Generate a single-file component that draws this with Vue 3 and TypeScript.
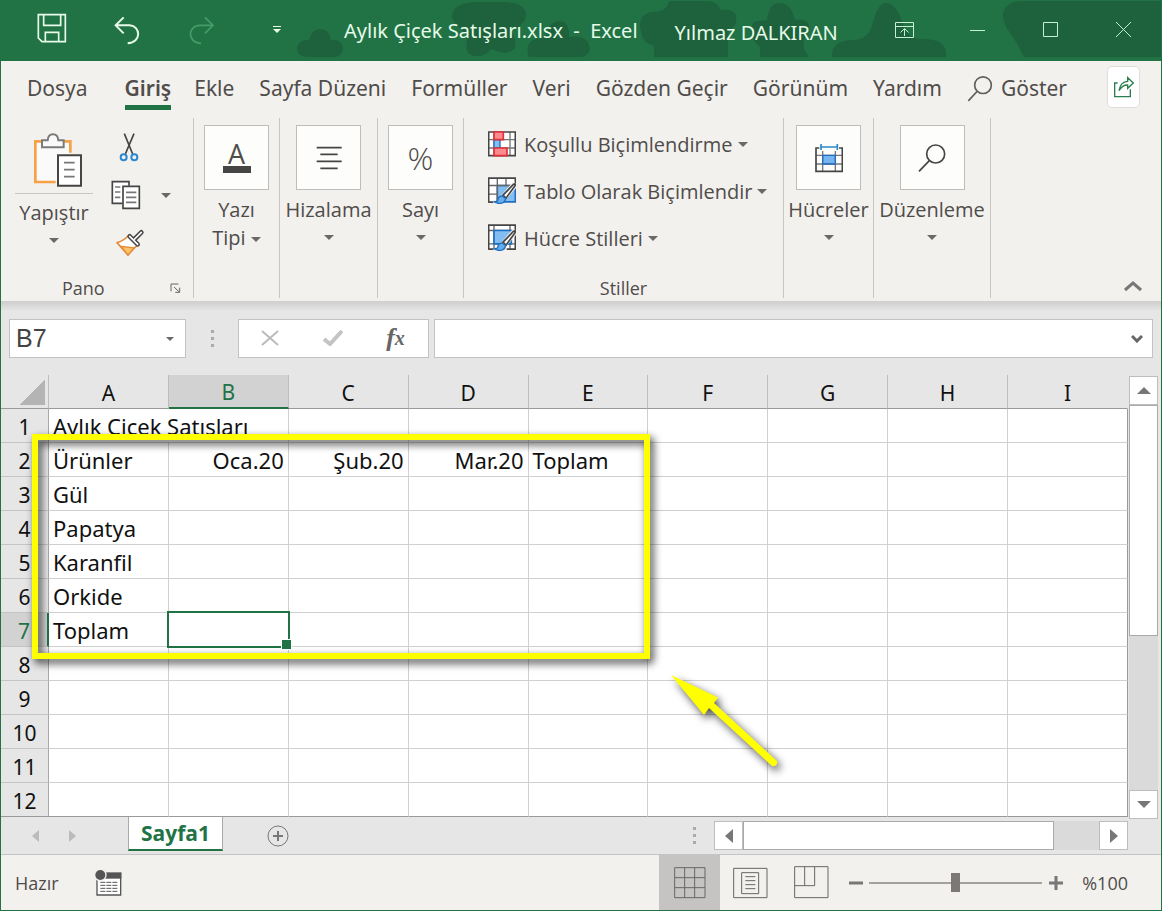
<script setup lang="ts">
import { ref } from 'vue'

interface Cell {
  text: string
  span?: number
  right?: boolean
  active?: boolean
}

const tabs: string[] = ['Dosya', 'Giriş', 'Ekle', 'Sayfa Düzeni', 'Formüller', 'Veri', 'Gözden Geçir', 'Görünüm', 'Yardım']
const activeTab = ref('Giriş')

const columns: string[] = ['A', 'B', 'C', 'D', 'E', 'F', 'G', 'H', 'I']

const labels: Record<number, string> = { 3: 'Gül', 4: 'Papatya', 5: 'Karanfil', 6: 'Orkide', 7: 'Toplam' }

function blanks(count: number): Cell[] {
  return Array.from({ length: count }, () => ({ text: '' }))
}

function cellsOf(row: number): Cell[] {
  if (row === 1) return [{ text: 'Aylık Çiçek Satışları', span: 2 }, ...blanks(7)]
  if (row === 2) {
    return [
      { text: 'Ürünler' },
      { text: 'Oca.20', right: true },
      { text: 'Şub.20', right: true },
      { text: 'Mar.20', right: true },
      { text: 'Toplam' },
      ...blanks(4),
    ]
  }
  return [{ text: labels[row] ?? '' }, { text: '', active: row === 7 }, ...blanks(7)]
}

const rows = Array.from({ length: 12 }, (_, i) => ({ number: i + 1, cells: cellsOf(i + 1) }))

const cellName = ref('B7')
const formula = ref('')
const zoom = ref(100)
</script>

<template>
  <div class="window">
    <header class="titlebar">
      <svg class="clouds" viewBox="0 0 882 61" width="882" height="61" aria-hidden="true">
        <g fill="#1e613d">
          <path d="M28 57Q18 56 18 48Q20 39 30 40Q33 29 41 29Q50 29 52 40Q63 39 64 48Q64 56 56 57Z" />
          <path d="M173 18Q172 2 200 2H225Q247 2 247 16Q246 25 232 31Q238 40 236 48Q230 55 220 52L212 49Q207 57 195 56Q185 54 188 40Q188 32 178 26Z" />
          <path d="M250 57Q244 40 262 38Q268 36 270 27Q276 19 285 22Q291 27 290 37Q310 34 311 50Q308 57 302 57Z" />
          <path d="M375 57V46Q363 42 363 35Q356 14 374 12Q388 12 390 1H430Q438 2 442 10Q462 8 456 25Q450 30 449 34V57Z" />
          <path d="M481 57V47Q466 33 475 22Q485 20 488 20Q490 3 500 3Q512 3 516 20Q535 18 528 34Q520 44 530 57Z" />
          <path d="M553 57Q552 40 575 40Q591 39 594 22Q599 3 607 3Q617 3 623 22Q629 39 642 39Q669 38 667 57Z" />
          <path d="M745 57Q738 42 727 27Q717 5 740 1H882V57Z" />
        </g>
      </svg>
      <div class="quick">
        <button aria-label="Kaydet">
          <svg viewBox="108 36 90 90" width="30" height="30" fill="none" stroke="#e9fbe9" stroke-width="5">
            <path d="M112 41H193V122H123L112 111ZM128 41V73H179V41M133 122V94H173V122" />
          </svg>
        </button>
        <button class="arrow-button" aria-label="Geri Al">
          <svg viewBox="340 45 84 90" width="28" height="30" fill="none" stroke="#e9fbe9" stroke-width="6">
            <path d="M372 52L348 76L372 100M348 76H390C424 78 426 128 384 130" />
          </svg>
        </button>
        <button class="arrow-button" aria-label="Yinele" disabled>
          <svg viewBox="567 45 84 90" width="28" height="30" fill="none" stroke="#459c68" stroke-width="5">
            <path d="M618 52L642 76L618 100M642 76H600C566 78 564 128 606 130" />
          </svg>
        </button>
        <button class="arrow-button" aria-label="Hızlı Erişim Araç Çubuğunu Özelleştir">
          <svg viewBox="0 0 8 8" width="8" height="8" fill="#e9fbe9"><path d="M0 0H8V1H0ZM0 3H8L4 7Z" /></svg>
        </button>
      </div>
      <h1 class="title">Aylık Çiçek Satışları.xlsx&nbsp; -&nbsp; Excel</h1>
      <span class="user">Yılmaz DALKIRAN</span>
      <div class="controls">
        <button aria-label="Şerit Görüntüleme Seçenekleri">
          <svg viewBox="0 0 20 16" width="20" height="16" fill="none" stroke="#c5f0d2">
            <path d="M.5 .5H18.5V15.5H.5ZM.5 4.5H18.5M9.5 14V7M5.500 10.500L9.500 6.500L13.500 10.500" />
          </svg>
        </button>
        <button aria-label="Simge Durumuna Küçült">
          <svg viewBox="0 0 16 16" width="16" height="16" stroke="#c5f0d2"><path d="M0 8.500H15" /></svg>
        </button>
        <button aria-label="Ekranı Kapla">
          <svg viewBox="0 0 16 16" width="16" height="16" fill="none" stroke="#c5f0d2"><path d="M.5 .5H14.500V14.500H.5Z" /></svg>
        </button>
        <button aria-label="Kapat">
          <svg viewBox="0 0 16 16" width="16" height="16" stroke="#c5f0d2"><path d="M0 0L15 15M15 0L0 15" /></svg>
        </button>
      </div>
    </header>

    <nav class="tabs">
      <button
        v-for="tab in tabs"
        :key="tab"
        class="tab"
        :class="{ current: tab === activeTab, file: tab === 'Dosya' }"
        @click="activeTab = tab"
      >
        {{ tab }}
      </button>
      <button class="tab tell">
        <svg viewBox="810 228 78 80" width="26" height="27" fill="none" stroke="#605e5c" stroke-width="5">
          <circle cx="858" cy="258" r="25" /><path d="M840 277L814 305" />
        </svg>
        Göster
      </button>
      <button class="share" aria-label="Paylaş">
        <svg viewBox="1236 228 66 66" width="22" height="22" fill="none" stroke="#2c7d50" stroke-width="4">
          <path d="M1250 249H1241V290H1288V268M1254 272Q1258 245 1280 244V233L1297 249L1280 265V255Q1264 255 1254 272Z" />
        </svg>
      </button>
    </nav>

    <section class="ribbon">
      <div class="group pano">
        <div class="tools">
          <button class="paste">
            <svg viewBox="100 50 150 165" width="50" height="55" fill="none">
              <path d="M107 77H213V118H176V200H107Z" fill="#fafafa" />
              <path d="M128 78H107V200H168M192 78H212V112" stroke="#f7a145" stroke-width="8" />
              <path d="M127 75H144C146 51 174 51 176 75H192V96H127Z" fill="#fafafa" stroke="#7b7b7b" stroke-width="6" />
              <path d="M175 120H244V211H175Z" fill="#fff" stroke="#454545" stroke-width="6" />
              <path d="M193 142H225M193 163H225M193 184H225" stroke="#777" stroke-width="5" />
            </svg>
            <span class="paste-label">Yapıştır</span>
            <i class="caret"></i>
          </button>
          <div class="small-tools">
            <button aria-label="Kes">
              <svg viewBox="357 48 60 90" width="20" height="30" fill="none">
                <path d="M373 53L398 114M402 53L376 114" stroke="#454545" stroke-width="5" />
                <g stroke="#2b88d0" stroke-width="6"><circle cx="371" cy="124" r="9" /><circle cx="403" cy="124" r="9" /></g>
              </svg>
            </button>
            <button class="copy" aria-label="Kopyala">
              <svg viewBox="334 195 90 90" width="30" height="30" fill="none" stroke="#454545" stroke-width="5">
                <path d="M388 212V200H338V265H368" fill="#fff" />
                <path d="M346 216H362M346 231H362M346 247H362" stroke="#777" />
                <path d="M370 214H419V280H370Z" fill="#fff" />
                <path d="M379 232H410M379 247H410M379 262H410" stroke="#777" />
              </svg>
              <i class="caret"></i>
            </button>
            <button aria-label="Biçim Boyacısı">
              <svg viewBox="343 342 90 84" width="30" height="28" fill="none" stroke-linejoin="round">
                <path d="M349 383Q368 378 382 363L410 391Q398 400 382 420Z" fill="#fff" stroke="#e98a35" stroke-width="5" />
                <path d="M361 394L401 399L382 420Z" fill="#fbc46b" stroke="#e98a35" stroke-width="4" />
                <g stroke="#454545" stroke-width="14" stroke-linecap="round"><path d="M387 364L411 388M402 372L422 352" /></g>
                <g stroke="#fff" stroke-width="5" stroke-linecap="round"><path d="M387 364L411 388M402 372L422 352" /></g>
              </svg>
            </button>
          </div>
        </div>
        <div class="group-name">
          <span>Pano</span>
          <button class="launcher" aria-label="Pano seçenekleri">
            <svg viewBox="511 503 33 33" width="11" height="11" fill="none" stroke="#666" stroke-width="3">
              <path d="M514 528V506H536M523 515L539 530M540 517V531H527" />
            </svg>
          </button>
        </div>
      </div>

      <div class="group font">
        <button class="big">
          <span class="tile"><span class="letter">A</span></span>
          <span>Yazı<br />Tipi <i class="caret"></i></span>
        </button>
      </div>

      <div class="group align">
        <button class="big">
          <span class="tile">
            <svg viewBox="108 90 78 72" width="26" height="24" stroke="#454545" stroke-width="5">
              <path d="M110 95H185M121 115H173M110 136H185M121 157H173" />
            </svg>
          </span>
          <span>Hizalama</span>
          <i class="caret"></i>
        </button>
      </div>

      <div class="group number">
        <button class="big">
          <span class="tile percent">%</span>
          <span>Sayı</span>
          <i class="caret"></i>
        </button>
      </div>

      <div class="group styles">
        <div class="style-list">
          <button>
            <svg viewBox="24 45 84 78" width="28" height="26" fill="none">
              <path d="M26 48H106V119H26Z" fill="#fff" />
              <path d="M26 71H106M26 96H106M42 48V119M90 48V119" stroke="#777" stroke-width="4" />
              <path d="M26 48H106V119H26Z" stroke="#454545" stroke-width="5" />
              <path d="M42 71H60V96H42Z" fill="#83bdf1" stroke="#1f6fc0" stroke-width="4" />
              <path d="M42 48H70V71H42ZM42 96H81V119H42Z" fill="#fa8c90" stroke="#e03038" stroke-width="5" />
            </svg>
            Koşullu Biçimlendirme <i class="caret"></i>
          </button>
          <button>
            <svg viewBox="24 187 84 80" width="28" height="27" fill="none">
              <path d="M26 190H106V262H26Z" fill="#fff" />
              <path d="M52 212H106V261H52Z" fill="#83bdf1" stroke="#1f6fc0" stroke-width="5" />
              <path d="M26 212H106M26 238H52M52 190V262M78 190V212" stroke="#666" stroke-width="4" />
              <path d="M26 264V190H106V206M26 262H40" stroke="#454545" stroke-width="5" />
              <path d="M107 206L62 258" stroke="#f3f1ee" stroke-width="19" />
              <path d="M69 241L100 209Q108 204 105 213L78 250Z" fill="#fff" stroke="#454545" stroke-width="5" />
              <path d="M66 243Q54 244 53 258Q48 262 41 260Q55 269 68 264Q78 259 76 250Z" fill="#69aceb" stroke="#1f6fc0" stroke-width="4" />
            </svg>
            Tablo Olarak Biçimlendir <i class="caret"></i>
          </button>
          <button>
            <svg viewBox="24 187 84 80" width="28" height="27" fill="none">
              <path d="M26 190H106V262H26Z" fill="#fff" />
              <path d="M26 206H106M26 246H106M42 190V262M90 190V262" stroke="#666" stroke-width="4" />
              <path d="M42 206H94V246H42Z" fill="#83bdf1" stroke="#1f6fc0" stroke-width="5" />
              <path d="M26 264V190H106V262H80M26 262H40" stroke="#454545" stroke-width="5" />
              <path d="M107 206L62 258" stroke="#f3f1ee" stroke-width="19" />
              <path d="M69 241L100 209Q108 204 105 213L78 250Z" fill="#fff" stroke="#454545" stroke-width="5" />
              <path d="M66 243Q54 244 53 258Q48 262 41 260Q55 269 68 264Q78 259 76 250Z" fill="#69aceb" stroke="#1f6fc0" stroke-width="4" />
            </svg>
            Hücre Stilleri <i class="caret"></i>
          </button>
        </div>
        <div class="group-name"><span>Stiller</span></div>
      </div>

      <div class="group cells">
        <button class="big">
          <span class="tile">
            <svg viewBox="135 84 84 90" width="28" height="30" fill="none">
              <path d="M158 121H196V147H158Z" fill="#76b5ef" />
              <path d="M138 121H217M138 147H217M158 108V169M196 108V169" stroke="#777" stroke-width="4" />
              <path d="M158 121H196V147H158Z" stroke="#1f6fc0" stroke-width="4" />
              <path d="M148 99H138V169H217V99H207" stroke="#454545" stroke-width="5" />
              <path d="M153 96H202M153 87V105M202 87V105" stroke="#2b88c8" stroke-width="5" />
            </svg>
          </span>
          <span>Hücreler</span>
          <i class="caret"></i>
        </button>
      </div>

      <div class="group editing">
        <button class="big">
          <span class="tile">
            <svg viewBox="446 85 84 84" width="28" height="28" fill="none" stroke="#454545" stroke-width="5">
              <circle cx="499" cy="115" r="27" /><path d="M480 135L449 167" />
            </svg>
          </span>
          <span>Düzenleme</span>
          <i class="caret"></i>
        </button>
      </div>

      <button class="collapse" aria-label="Şeridi Daralt">
        <svg viewBox="0 0 18 12" width="18" height="12" fill="none" stroke="#777" stroke-width="3"><path d="M1 10L9 3L17 10" /></svg>
      </button>
    </section>

    <section class="formula-bar">
      <div class="name-box">
        <input v-model="cellName" aria-label="Ad Kutusu" />
        <button aria-label="Ad listesi"><i class="caret small"></i></button>
      </div>
      <span class="dots"><i></i><i></i><i></i></span>
      <div class="entry">
        <button aria-label="İptal" disabled>
          <svg viewBox="0 0 18 16" width="18" height="16" stroke="#bbb" stroke-width="2"><path d="M1 1L17 15M17 1L1 15" /></svg>
        </button>
        <button aria-label="Gir" disabled>
          <svg viewBox="0 0 20 16" width="20" height="16" fill="none" stroke="#c4c4c4" stroke-width="4"><path d="M1 9L7 14L19 1" /></svg>
        </button>
        <button class="fx" aria-label="İşlev Ekle">f<small>x</small></button>
      </div>
      <div class="formula">
        <input v-model="formula" aria-label="Formül Çubuğu" />
        <button aria-label="Formül Çubuğunu Genişlet">
          <svg viewBox="0 0 12 9" width="12" height="9" fill="none" stroke="#666" stroke-width="3"><path d="M1 2L6 7L11 2" /></svg>
        </button>
      </div>
    </section>

    <main class="sheet">
      <div class="grid-wrap">
        <table class="grid">
          <thead>
            <tr>
              <th class="corner" aria-label="Tümünü Seç"></th>
              <th v-for="col in columns" :key="col" scope="col" :class="{ picked: col === 'B' }">{{ col }}</th>
            </tr>
          </thead>
          <tbody>
            <tr v-for="row in rows" :key="row.number">
              <th scope="row" :class="{ picked: row.number === 7 }">{{ row.number }}</th>
              <td
                v-for="(cell, i) in row.cells"
                :key="i"
                :colspan="cell.span"
                :class="{ right: cell.right, active: cell.active }"
              >
                {{ cell.text }}
              </td>
            </tr>
          </tbody>
        </table>
        <div class="highlight"></div>
        <svg class="arrow" viewBox="0 0 130 110" width="130" height="110" aria-hidden="true">
          <path d="M11 12L58 34.500L54 40L117 98Q118 104 112 103L49 45L44 52Z" fill="#ff0" />
        </svg>
      </div>
      <div class="vscroll">
        <button aria-label="Yukarı"><svg viewBox="0 0 14 7" width="14" height="7" fill="#777"><path d="M7 0L14 7H0Z" /></svg></button>
        <div class="vthumb"></div>
        <button aria-label="Aşağı"><svg viewBox="0 0 14 7" width="14" height="7" fill="#777"><path d="M0 0H14L7 7Z" /></svg></button>
      </div>
    </main>

    <div class="sheet-tabs">
      <button class="step" aria-label="Önceki sayfa" disabled><svg viewBox="0 0 7 12" width="7" height="12" fill="#bbb"><path d="M7 0V12L0 6Z" /></svg></button>
      <button class="step" aria-label="Sonraki sayfa" disabled><svg viewBox="0 0 7 12" width="7" height="12" fill="#bbb"><path d="M0 0V12L7 6Z" /></svg></button>
      <button class="sheet-tab">Sayfa1</button>
      <button class="add" aria-label="Yeni sayfa">
        <svg viewBox="0 0 24 24" width="24" height="24" fill="none" stroke="#777">
          <circle cx="12" cy="12" r="10" /><path d="M7 12H17M12 7V17" stroke-width="2" />
        </svg>
      </button>
      <span class="dots"><i></i><i></i><i></i></span>
      <div class="hscroll">
        <button aria-label="Sola"><svg viewBox="0 0 8 14" width="8" height="14" fill="#777"><path d="M8 0V14L0 7Z" /></svg></button>
        <div class="hthumb"></div>
        <button aria-label="Sağa"><svg viewBox="0 0 8 14" width="8" height="14" fill="#777"><path d="M0 0V14L8 7Z" /></svg></button>
      </div>
    </div>

    <footer class="status">
      <span class="ready">Hazır</span>
      <button class="macro" aria-label="Makro Kaydet">
        <svg viewBox="284 832 81 81" width="27" height="27" fill="none" stroke="#555" stroke-width="4">
          <path d="M290 843V910H361V843" fill="#fff" />
          <path d="M290 842H363V861H290Z" fill="#555" stroke="none" />
          <circle cx="300" cy="850" r="19" fill="#f3f1ee" stroke="none" /><circle cx="300" cy="850" r="15" fill="#555" stroke="none" />
          <path d="M300 872H352M300 881H352M300 890H352M300 899H352" stroke-width="3" stroke-dasharray="15 3" />
        </svg>
      </button>
      <div class="views">
        <button class="on" aria-label="Normal">
          <svg viewBox="101 260 96 96" width="32" height="32" fill="none" stroke="#666" stroke-width="3">
            <path d="M103 262H194V352H103ZM133 262V352M163 262V352M103 292H194M103 322H194" />
          </svg>
        </button>
        <button aria-label="Sayfa Düzeni">
          <svg viewBox="281 258 105 96" width="35" height="32" fill="none" stroke="#666" stroke-width="3">
            <path d="M283 262H383V350H283ZM307 275H358V338H307ZM318 287H348M318 299H348M318 311H348M318 323H348" />
          </svg>
        </button>
        <button aria-label="Sayfa Sonu Önizleme">
          <svg viewBox="461 257 105 99" width="35" height="33" fill="none" stroke="#666" stroke-width="3">
            <path d="M463 259H563V352H463ZM463 316H523V259M493 259V316" />
          </svg>
        </button>
      </div>
      <button class="zoom-step" aria-label="Uzaklaştır"><svg viewBox="0 0 14 14" width="14" height="14" stroke="#777" stroke-width="3"><path d="M0 7H14" /></svg></button>
      <input v-model="zoom" class="zoom" type="range" min="10" max="190" aria-label="Yakınlaştırma" />
      <button class="zoom-step" aria-label="Yakınlaştır"><svg viewBox="0 0 14 14" width="14" height="14" stroke="#777" stroke-width="3"><path d="M0 7H14M7 0V14" /></svg></button>
      <span class="zoom-value">%{{ zoom }}</span>
    </footer>
  </div>
</template>

<style>
body {
  margin: 0;
}
</style>

<style scoped>
* {
  box-sizing: border-box;
}

.window {
  display: flex;
  flex-direction: column;
  min-height: 100vh;
  border: 1px solid #217346;
  border-top: 0;
  background: #e6e6e6;
  color: #4f4c4a;
  font-family: "Open Sans", "Noto Sans", sans-serif;
  font-size: 20px;
  line-height: 28px;
}

button {
  display: flex;
  align-items: center;
  justify-content: center;
  margin: 0;
  padding: 0;
  border: 0;
  background: none;
  color: inherit;
  font: inherit;
  white-space: nowrap;
}

input {
  min-width: 0;
  margin: 0;
  padding: 0;
  border: 0;
  outline: 0;
  background: none;
  color: inherit;
  font: inherit;
}

svg {
  display: block;
  flex: none;
}

.caret {
  display: inline-block;
  flex: none;
  border: 5px solid transparent;
  border-top-color: #6b6865;
  border-bottom: 0;
  vertical-align: middle;
}

.caret.small {
  border-width: 4px 4px 0;
}

.titlebar {
  position: relative;
  display: flex;
  height: 61px;
  background: #217346;
  color: #e6fbe8;
}

.clouds {
  position: absolute;
  top: 0;
  right: 0;
}

.quick,
.controls,
.title,
.user {
  position: relative;
}

.quick,
.controls {
  display: flex;
}

.quick {
  padding: 0 30px 6px 13px;
}

.quick button {
  width: 75px;
}

.quick .arrow-button {
  padding-top: 4px;
}

.title,
.user {
  margin: 0;
  font-family: "Noto Sans", "Open Sans", sans-serif;
  font-size: 20px;
  font-weight: 400;
  line-height: 61px;
  white-space: nowrap;
}

.user {
  margin-left: 37px;
  padding-top: 2px;
}

.controls {
  margin-left: auto;
  padding: 0 1px 2px 0;
}

.controls button {
  width: 73px;
}

.tabs {
  display: flex;
  align-items: flex-start;
  gap: 25px;
  padding: 5px 21px 0 26px;
  background: #f3f1ee;
  font-family: "Noto Sans", "Open Sans", sans-serif;
  font-size: 21px;
}

.tab {
  height: 44px;
  padding-top: 5px;
  border-bottom: 5px solid transparent;
}

.tab.file {
  margin-right: 12px;
}

.tab.current {
  border-bottom-color: #217346;
  font-weight: 600;
}

.tab.current + .tab {
  margin-left: -2px;
}

.tell {
  gap: 8px;
}

.share {
  width: 33px;
  height: 42px;
  margin-left: auto;
  border: 1px solid #e0dedc;
  border-radius: 5px;
  background: #fff;
}

.ribbon {
  display: flex;
  align-items: stretch;
  height: 192px;
  padding: 8px 0 3px;
  border-bottom: 1px solid #d2d0ce;
  background: #f3f1ee;
}

.group {
  display: flex;
  flex: none;
  flex-direction: column;
  border-right: 1px solid #c8c6c4;
  padding-top: 7px;
}

.pano { width: 193px; }
.font { width: 86px; }
.align { width: 98px; }
.number { width: 86px; }
.styles { width: 320px; }
.cells { width: 90px; }
.editing { width: 117px; }

.tools {
  display: flex;
  padding-left: 14px;
}

.paste {
  flex-direction: column;
  justify-content: flex-start;
  width: 78px;
  padding-top: 7px;
}

.paste svg {
  margin-left: 8px;
}

.paste-label {
  align-self: stretch;
  margin: 6px 0 11px;
  padding-top: 5px;
  border-top: 1px solid #c8c6c4;
}

.small-tools {
  display: flex;
  flex-direction: column;
  margin: -2px 0 0 18px;
}

.small-tools button {
  justify-content: flex-start;
  height: 48px;
}

.small-tools button:first-child {
  padding-left: 8px;
}

.small-tools button:last-child {
  padding-left: 4px;
}

.small-tools .copy {
  gap: 20px;
}

.group-name {
  display: flex;
  align-items: center;
  justify-content: center;
  margin-top: auto;
  font-size: 18px;
  line-height: 20px;
}

.pano .group-name {
  justify-content: space-between;
  padding: 0 12px 0 61px;
}

.big {
  flex-direction: column;
}

.big > .caret {
  margin-top: 11px;
}

.tile {
  display: flex;
  align-items: center;
  justify-content: center;
  width: 65px;
  height: 65px;
  margin-bottom: 6px;
  border: 1px solid #bfbdbb;
  background: #fdfefc;
}

.letter {
  width: 28px;
  border-bottom: 7px solid #454545;
  font-size: 27px;
  line-height: 24px;
}

.percent {
  font-size: 32px;
  font-weight: 300;
}

.style-list {
  display: flex;
  flex-direction: column;
  align-items: flex-start;
  padding-left: 24px;
}

.style-list button {
  height: 47px;
  margin-top: -4px;
  margin-bottom: 4px;
}

.style-list svg {
  margin: 0 8px 2px 0;
}

.style-list .caret {
  margin-left: 5px;
}

.collapse {
  align-self: flex-end;
  margin: 0 19px 6px auto;
}

.formula-bar {
  display: flex;
  height: 73px;
  padding: 17px 8px;
  background: linear-gradient(#cfcfcf, #e6e6e6 9px);
}

.name-box,
.entry,
.formula {
  display: flex;
  border: 1px solid #c3c3c3;
  background: #fff;
}

.name-box {
  width: 177px;
}

.name-box input {
  flex: 1;
  padding: 0 0 2px 6px;
  color: #444;
  font-family: "Liberation Sans", Arial, sans-serif;
  font-size: 25px;
}

.name-box button {
  width: 30px;
}

.dots {
  display: flex;
  flex-direction: column;
  align-items: center;
  justify-content: center;
  gap: 4px;
}

.dots i {
  width: 3px;
  height: 3px;
  background: #aaa;
}

.formula-bar .dots {
  width: 52px;
}

.entry {
  width: 191px;
}

.entry button {
  flex: 1;
  padding: 0 2px 2px 0;
}

.fx {
  color: #666;
  font-family: "Liberation Serif", "Times New Roman", serif;
  font-size: 26px;
  font-style: italic;
  font-weight: 700;
}

.fx small {
  font-size: 20px;
}

.formula {
  flex: 1;
  margin-left: 5px;
}

.formula input {
  flex: 1;
}

.formula button {
  width: 30px;
}

.sheet {
  display: flex;
}

.grid-wrap {
  position: relative;
  flex: 1;
}

.grid {
  width: 100%;
  border-spacing: 0;
  table-layout: fixed;
  color: #111;
  font-family: "Noto Sans", "Open Sans", sans-serif;
  font-size: 22px;
  line-height: 30px;
}

.grid th {
  height: 34px;
  padding: 2px 0 0;
  border-right: 1px solid #a8a8a8;
  border-bottom: 1px solid #c4c4c4;
  background: #e6e6e6;
  font-size: 21px;
  font-weight: 400;
}

.grid thead th {
  border-right-color: #bdbdbd;
  border-bottom-color: #999;
}

.grid thead th:last-child {
  border-right-color: transparent;
}

.grid .corner {
  width: 48px;
  background: linear-gradient(135deg, transparent 50%, #b4b4b4 50%) 18px 4px / 26px 26px no-repeat #e6e6e6;
}

.grid th.picked {
  background: #d2d2d2;
  color: #217346;
}

.grid thead th.picked {
  border-bottom: 2px solid #217346;
}

.grid tbody th.picked {
  border-right: 2px solid #217346;
}

.grid td {
  position: relative;
  height: 34px;
  padding: 0 4px;
  border-right: 1px solid #d0d0d0;
  border-bottom: 1px solid #d0d0d0;
  background: #fff;
  white-space: nowrap;
}

.grid td:last-child {
  border-right-color: #999;
}

.grid tbody tr:last-child > * {
  border-bottom-color: #999;
}

.grid td.right {
  text-align: right;
}

.grid td.active::before {
  content: "";
  position: absolute;
  inset: -2px -2px -2px -2px;
  z-index: 1;
  border: 2px solid #217346;
}

.grid td.active::after {
  content: "";
  position: absolute;
  right: -4px;
  bottom: -4px;
  z-index: 2;
  width: 9px;
  height: 9px;
  border: 1px solid #fff;
  background: #217346;
}

.highlight {
  position: absolute;
  top: 59px;
  left: 31px;
  z-index: 3;
  width: 618px;
  height: 225px;
  border: 6px solid #ff0;
  filter: drop-shadow(3px 4px 4px rgba(0, 0, 0, 0.8));
}

.arrow {
  position: absolute;
  top: 288px;
  left: 659px;
  z-index: 3;
  filter: drop-shadow(3px 4px 4px rgba(0, 0, 0, 0.7));
}

.vscroll {
  display: flex;
  flex-direction: column;
  width: 29px;
  margin: 1px 3px -2px 1px;
  background: #dadada;
}

.vscroll button,
.hscroll button,
.vthumb,
.hthumb {
  flex: none;
  border: 1px solid #bdbdbd;
  background: #fff;
}

.vscroll button {
  height: 29px;
}

.vscroll button:last-child {
  margin-top: auto;
}

.vthumb {
  height: 231px;
  border-color: #aaa;
}

.sheet-tabs {
  display: flex;
  align-items: flex-start;
  height: 38px;
  padding: 0 33px 0 16px;
  border-bottom: 1px solid #c4c4c4;
}

.step {
  width: 37px;
  height: 37px;
}

.sheet-tab {
  width: 95px;
  height: 34px;
  margin-left: 37px;
  border: solid #aaa;
  border-width: 0 1px;
  border-bottom: 2px solid #217346;
  background: #fff;
  color: #217346;
  font-size: 21px;
  font-weight: 700;
}

.add {
  height: 38px;
  margin-left: 43px;
}

.sheet-tabs .dots {
  height: 37px;
  margin: 0 18px 0 auto;
}

.hscroll {
  display: flex;
  width: 414px;
  height: 29px;
  margin-top: 4px;
  background: #dadada;
}

.hscroll button {
  width: 29px;
}

.hscroll button:last-child {
  margin-left: auto;
}

.hthumb {
  width: 311px;
  border-color: #aaa;
}

.status {
  display: flex;
  flex: 1;
  align-items: center;
  min-height: 55px;
  padding: 0 33px 0 14px;
  background: #f3f1ee;
  font-size: 18px;
}

.macro {
  margin-left: 36px;
}

.views {
  display: flex;
  align-self: stretch;
  margin-left: auto;
}

.views button {
  width: 61px;
}

.views .on {
  background: #c6c4c2;
}

.zoom-step {
  width: 27px;
}

.zoom {
  width: 173px;
  height: 20px;
  appearance: none;
  background: linear-gradient(#a3a09e, #a3a09e) center / 100% 2px no-repeat;
}

.zoom::-webkit-slider-thumb {
  appearance: none;
  width: 9px;
  height: 19px;
  background: #7b7875;
}

.zoom-value {
  margin-left: 13px;
}
</style>
